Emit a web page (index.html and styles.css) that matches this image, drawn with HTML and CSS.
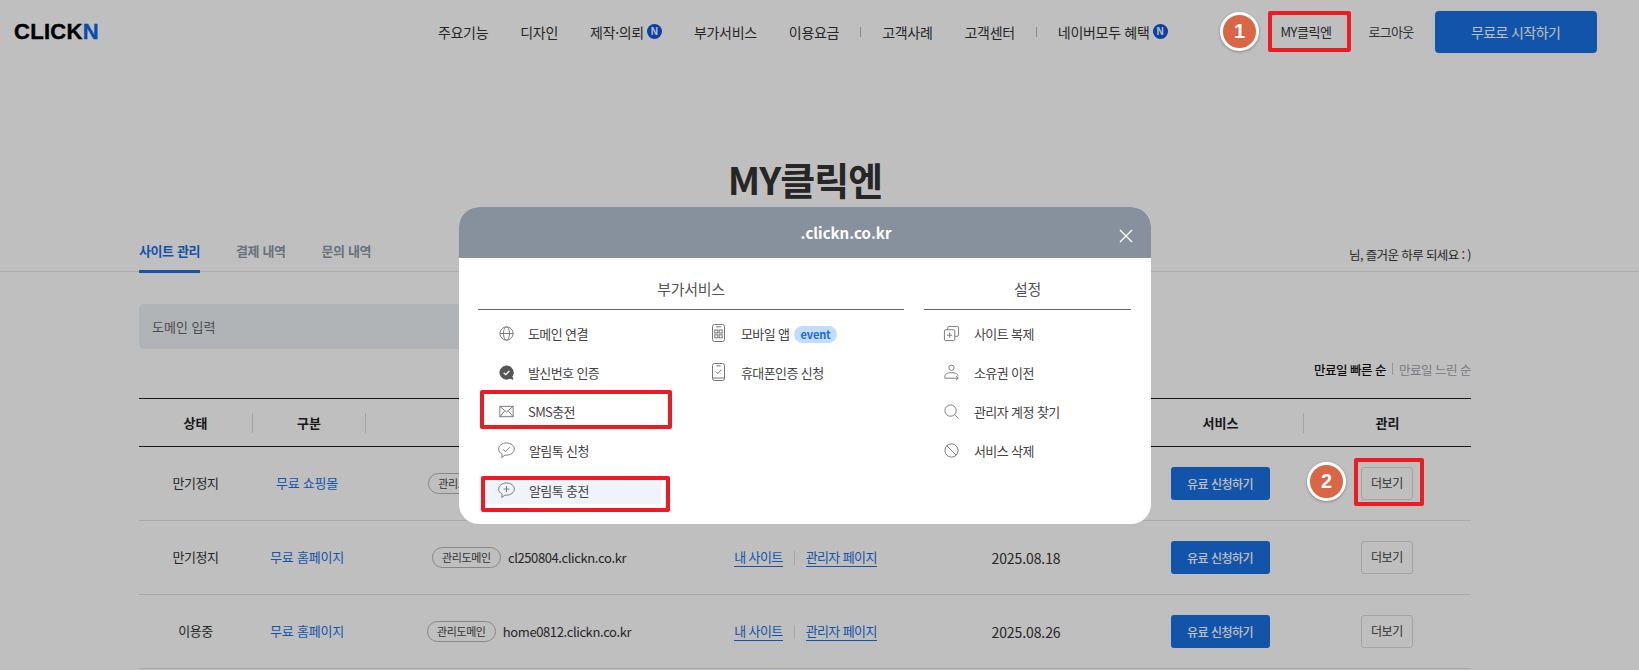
FILE: index.html
```html
<!DOCTYPE html>
<html lang="ko">
<head>
    <meta charset="UTF-8">
    <meta name="viewport" content="width=device-width, initial-scale=1.0">
    <title>MY클릭엔</title>
    <link rel="stylesheet" href="styles.css">
</head>
<body>
    <div class="page">
        <header class="top">
            <a class="logo">CLICK<b>N</b></a>
            <nav class="gnb">
                <a>주요기능</a>
                <a>디자인</a>
                <a>제작·의뢰<i class="new">N</i></a>
                <a>부가서비스</a>
                <a>이용요금</a>
                <span class="gnb-sep"></span>
                <a>고객사례</a>
                <a>고객센터</a>
                <span class="gnb-sep"></span>
                <a>네이버모두 혜택<i class="new">N</i></a>
            </nav>
            <div class="util">
                <a class="util-my">MY클릭엔</a>
                <a class="util-out">로그아웃</a>
                <a class="start-btn">무료로 시작하기</a>
            </div>
        </header>

        <h1 class="page-title">MY클릭엔</h1>

        <div class="tabs-line">
            <div class="wrap tabs-row">
                <div class="tabs">
                    <a class="tab on">사이트 관리</a>
                    <a class="tab">결제 내역</a>
                    <a class="tab">문의 내역</a>
                </div>
                <p class="hello">님, 즐거운 하루 되세요 : )</p>
            </div>
        </div>

        <div class="wrap">
            <div class="search-box">도메인 입력</div>
            <div class="sort">
                <a class="on">만료일 빠른 순</a>
                <span class="sort-sep"></span>
                <a>만료일 느린 순</a>
            </div>

            <div class="tbl">
                <div class="thead">
                    <div>상태</div>
                    <div>구분</div>
                    <div></div>
                    <div></div>
                    <div></div>
                    <div>서비스</div>
                    <div>관리</div>
                </div>
                <div class="trow">
                    <div class="state">만기정지</div>
                    <div class="kind">무료 쇼핑몰</div>
                    <div class="domain domain-first"><span class="badge">관리도메인</span></div>
                    <div></div>
                    <div></div>
                    <div><a class="pay-btn">유료 신청하기</a></div>
                    <div><a class="more-btn">더보기</a></div>
                </div>
                <div class="trow">
                    <div class="state">만기정지</div>
                    <div class="kind">무료 홈페이지</div>
                    <div class="domain"><span class="badge">관리도메인</span>cl250804.clickn.co.kr</div>
                    <div class="links"><a>내 사이트</a><span class="link-sep"></span><a>관리자 페이지</a></div>
                    <div class="date">2025.08.18</div>
                    <div><a class="pay-btn">유료 신청하기</a></div>
                    <div><a class="more-btn">더보기</a></div>
                </div>
                <div class="trow">
                    <div class="state">이용중</div>
                    <div class="kind">무료 홈페이지</div>
                    <div class="domain"><span class="badge">관리도메인</span>home0812.clickn.co.kr</div>
                    <div class="links"><a>내 사이트</a><span class="link-sep"></span><a>관리자 페이지</a></div>
                    <div class="date">2025.08.26</div>
                    <div><a class="pay-btn">유료 신청하기</a></div>
                    <div><a class="more-btn">더보기</a></div>
                </div>
            </div>
        </div>

        <div class="dim">
            <div class="modal">
                <div class="modal-head">
                    <strong>.clickn.co.kr</strong>
                    <svg class="close" viewBox="0 0 14 14"><path d="M1 1l12 12M13 1L1 13"/></svg>
                </div>
                <div class="modal-body">
                    <section class="group group-svc">
                        <h3>부가서비스</h3>
                        <div class="group-cols">
                            <ul class="menu">
                                <li>
                                    <svg class="ico" viewBox="0 0 18 18"><circle cx="9" cy="9" r="7"/><ellipse cx="9" cy="9" rx="3.2" ry="7"/><path d="M2 9h14"/></svg>
                                    <span>도메인 연결</span>
                                </li>
                                <li>
                                    <svg class="ico" viewBox="0 0 18 18"><path class="solid" d="M9 2a7 7 0 1 0 3.6 13l3.2 1.2-1-3A7 7 0 0 0 9 2z"/><path class="tick" d="M6 9.2l2.2 2.1L12 7.4"/></svg>
                                    <span>발신번호 인증</span>
                                </li>
                                <li>
                                    <svg class="ico" viewBox="0 0 18 18"><rect x="2" y="3.5" width="14" height="11"/><path d="M2 3.5l7 6 7-6M2 14.5l5-6M16 14.5l-5-6"/></svg>
                                    <span>SMS충전</span>
                                </li>
                                <li class="talk">
                                    <svg class="ico" viewBox="0 0 18 18"><path d="M9 1C4.400 1 .7 3.900 .7 7.500c0 2.300 1.500 4.300 3.800 5.500l-.6 3.500 3.500-2.700c.5.100 1 .1 1.600.1 4.600 0 8.300-2.900 8.300-6.400S13.600 1 9 1z"/><path d="M5.500 7.800l2.500 2.400 4.500-4.600"/></svg>
                                    <span>알림톡 신청</span>
                                </li>
                                <li class="talk hover">
                                    <svg class="ico" viewBox="0 0 18 18"><path d="M9 1C4.400 1 .7 3.900 .7 7.500c0 2.300 1.500 4.300 3.800 5.500l-.6 3.500 3.500-2.700c.5.100 1 .1 1.600.1 4.600 0 8.300-2.900 8.300-6.400S13.600 1 9 1z"/><path d="M9 4.300v6.400M5.800 7.500h6.400"/></svg>
                                    <span>알림톡 충전</span>
                                </li>
                            </ul>
                            <ul class="menu">
                                <li class="phone">
                                    <svg class="ico-phone" viewBox="0 0 13 18"><rect x="0.500" y="0.500" width="12" height="17" rx="2"/><path d="M4 2.800h5"/><rect x="2.800" y="6" width="3" height="3"/><rect x="7.200" y="6" width="3" height="3"/><rect x="2.800" y="10.800" width="3" height="3"/><rect x="7.200" y="10.800" width="3" height="3"/></svg>
                                    <span>모바일 앱<span class="event">event</span></span>
                                </li>
                                <li class="phone">
                                    <svg class="ico-phone" viewBox="0 0 13 18"><rect x="0.500" y="0.500" width="12" height="17" rx="2"/><path d="M4.500 2.800h4M.5 15h12M3.800 8.500l2 2 3.500-3.800"/></svg>
                                    <span>휴대폰인증 신청</span>
                                </li>
                            </ul>
                        </div>
                    </section>
                    <section class="group group-set">
                        <h3>설정</h3>
                        <ul class="menu">
                            <li>
                                <svg class="ico" viewBox="0 0 18 18"><rect x="1.500" y="5" width="11" height="11.500" rx="1.500"/><path d="M5 5V3a1.500 1.500 0 0 1 1.500-1.500h8.500A1.500 1.500 0 0 1 16.500 3v7.500A1.500 1.500 0 0 1 15 12h-2.500M7 8v5.500M4.300 10.800h5.400"/></svg>
                                <span>사이트 복제</span>
                            </li>
                            <li>
                                <svg class="ico" viewBox="0 0 18 18"><circle cx="9" cy="4" r="2.800"/><path d="M2 15v-1.500C2 10.500 4.500 9.200 9 9.200s7 1.300 7 3.800M2 15h14M13.800 12.800l2.400 2.200-2.400 2.200"/></svg>
                                <span>소유권 이전</span>
                            </li>
                            <li>
                                <svg class="ico" viewBox="0 0 18 18"><circle cx="8" cy="8" r="6"/><path d="M12.500 12.500l4 4"/></svg>
                                <span>관리자 계정 찾기</span>
                            </li>
                            <li>
                                <svg class="ico" viewBox="0 0 18 18"><circle cx="9" cy="9" r="7"/><path d="M4 4l10 10"/></svg>
                                <span>서비스 삭제</span>
                            </li>
                        </ul>
                    </section>
                </div>
            </div>
        </div>

        <!-- guide marks on top of the capture -->
        <span class="mark mark-my"></span>
        <span class="mark mark-sms"></span>
        <span class="mark mark-talk"></span>
        <span class="mark mark-more"></span>
        <span class="step step-1">1</span>
        <span class="step step-2">2</span>
    </div>
</body>
</html>
```

FILE: styles.css
```css
* { box-sizing: border-box; }
html, body { margin: 0; padding: 0; height: 670px; overflow: hidden; background-color: #fff; }
body { font-family: 'Noto Sans CJK KR', 'Noto Sans', sans-serif; color: #333; font-size: 13px; }
a { color: inherit; text-decoration: none; }
ul { list-style: none; margin: 0; padding: 0; }
h1, h3, p { margin: 0; }

.page { position: relative; width: 1639px; height: 670px; overflow: hidden; }
.wrap { width: 1332px; margin-left: 139px; }

/* header */
.top { display: flex; align-items: center; height: 63px; }
.logo { margin-left: 14px; font-family: 'Liberation Sans', sans-serif; font-size: 22px; font-weight: 700; letter-spacing: 0.3px; color: #000; -webkit-text-stroke: 0.4px #000; }
.logo b { color: #0f66ea; -webkit-text-stroke: 0.4px #0f66ea; }
.gnb { display: flex; align-items: center; gap: 32px; margin-left: 339px; font-size: 14px; letter-spacing: -0.3px; color: #333; }
.gnb a { display: flex; align-items: center; }
.gnb-sep { width: 1px; height: 10px; margin: 0 -11px 0 -11px; background-color: #bbb; }
.new { display: inline-block; width: 15px; height: 15px; margin-left: 3px; border-radius: 50%; background-color: #0f54e0; color: #fff; font-family: 'Liberation Sans', sans-serif; font-size: 10px; font-weight: 700; font-style: normal; line-height: 15px; text-align: center; letter-spacing: 0; }
.util { display: flex; align-items: center; margin-left: 113px; font-size: 13px; letter-spacing: -0.5px; }
.util-my { width: 52px; white-space: nowrap; }
.util-out { margin-left: 36px; white-space: nowrap; color: #444; letter-spacing: -0.7px; }
.start-btn { display: flex; align-items: center; justify-content: center; width: 162px; height: 42px; margin-left: 21px; border-radius: 4px; background-color: #1971e3; color: #fff; font-size: 14px; letter-spacing: -0.6px; }

.page-title { margin-top: 93px; height: 46px; width: 1610px; font-size: 38px; font-weight: 700; line-height: 46px; letter-spacing: -1px; text-align: center; color: #333; }

/* tabs */
.tabs-line { margin-top: 30px; height: 40px; border-bottom: 1px solid #e4e4e4; }
.tabs-row { display: flex; justify-content: space-between; }
.tabs { display: flex; gap: 36px; }
.tab { height: 41px; padding-top: 9px; font-size: 13px; font-weight: 700; line-height: 20px; letter-spacing: -0.4px; color: #8a98a8; }
.tab.on { color: #1971e3; border-bottom: 3px solid #1971e3; }
.hello { padding-top: 13px; font-size: 12.5px; line-height: 20px; letter-spacing: -0.6px; color: #333; }

.search-box { width: 500px; height: 45px; margin-top: 32px; padding-left: 13px; border-radius: 5px; background-color: #ebf0f5; font-size: 13px; line-height: 45px; color: #666; }

.sort { display: flex; align-items: center; justify-content: flex-end; gap: 6px; height: 20px; margin-top: 10px; margin-bottom: 19px; font-size: 12.500px; letter-spacing: -0.5px; color: #a0a4aa; }
.sort .on { color: #111; font-weight: 500; }
.sort-sep { width: 1px; height: 12px; background-color: #ccc; }

/* table */
.thead, .trow { display: grid; grid-template-columns: 113px 113px 328px 222px 222px 166px 168px; align-items: center; text-align: center; }
.thead { height: 49px; border-top: 1px solid #222; border-bottom: 1px solid #222; font-weight: 700; font-size: 13px; color: #222; }
.thead > div { height: 20px; line-height: 20px; }
.thead > div + div { border-left: 1px solid #ddd; }
.trow { height: 74px; border-bottom: 1px solid #e2e2e2; font-size: 13px; letter-spacing: -0.4px; }
.state { padding-bottom: 2px; }
.kind { padding-right: 3px; padding-bottom: 2px; color: #1971e3; letter-spacing: -0.2px; }
.domain { display: flex; align-items: center; justify-content: center; font-size: 13px; letter-spacing: -0.4px; }
.domain-first { justify-content: flex-start; padding-left: 63px; }
.badge { display: inline-block; flex: none; width: 69px; height: 21px; margin-right: 7px; border: 1px solid #b5b5b5; border-radius: 11px; font-size: 11px; line-height: 19px; letter-spacing: -0.4px; text-align: center; color: #444; }
.links { display: flex; align-items: center; justify-content: center; padding-left: 3px; }
.links a { padding-bottom: 1px; border-bottom: 1px solid #1971e3; line-height: 16px; color: #1971e3; font-size: 13px; letter-spacing: -0.6px; }
.link-sep { width: 1px; height: 14px; margin: 0 11px; background-color: #ddd; }
.date { font-size: 14px; letter-spacing: -0.1px; }
.pay-btn { display: inline-block; width: 99px; height: 33px; border-radius: 3px; background-color: #1971e3; color: #fff; font-size: 12px; font-weight: 500; line-height: 33px; letter-spacing: -0.5px; vertical-align: middle; }
.more-btn { display: inline-block; width: 52px; height: 33px; border: 1px solid #dcdcdc; border-radius: 3px; font-size: 12px; line-height: 30px; letter-spacing: -0.3px; color: #444; vertical-align: middle; }

/* dim + modal */
.dim { position: absolute; left: 0; top: 0; width: 100%; height: 100%; padding-top: 207px; background-color: rgba(0, 0, 0, 0.25); }
.modal { width: 692px; margin-left: 459px; border-radius: 20px; overflow: hidden; background-color: #fff; }
.modal-head { position: relative; display: flex; align-items: center; justify-content: center; height: 51px; padding-left: 82px; background-color: #87919d; color: #fff; font-size: 15px; }
.modal-head strong { font-weight: 700; }
.close { position: absolute; right: 18px; top: 22px; width: 14px; height: 14px; }
.close path { fill: none; stroke: #fff; stroke-width: 1.4; }
.modal-body { display: flex; gap: 20px; padding: 20px 20px 20px 19px; }
.group h3 { height: 32px; border-bottom: 1px solid #666; font-size: 15px; font-weight: 400; line-height: 22px; letter-spacing: -0.3px; text-align: center; color: #555; }
.group-svc { width: 426px; }
.group-set { width: 207px; }
.group-cols { display: flex; gap: 38px; padding-left: 7px; }
.group-cols > .menu:first-child { width: 176px; }
.menu { display: flex; flex-direction: column; gap: 11.3px; margin-top: 9px; }
.group-set .menu { padding-left: 6px; }
.menu li { display: flex; align-items: center; gap: 13px; height: 28px; padding-left: 13px; font-size: 13px; letter-spacing: -0.6px; color: #444; white-space: nowrap; }
.group-set .menu li { gap: 14px; }
.menu li.talk { gap: 14px; }
.menu li.phone { gap: 16px; }
.menu li.hover { background-color: #f0f3f9; }
.ico { flex: none; width: 17px; height: 17px; }
.ico-phone { flex: none; width: 13px; height: 18px; }
.ico *, .ico-phone * { fill: none; stroke: #777; stroke-width: 1; }
.ico .solid { fill: #555; stroke: #555; }
.ico .tick { stroke: #fff; stroke-width: 1.4; }
.event { display: inline-block; height: 17px; margin-left: 5px; padding: 0 6px; border-radius: 9px; background-color: #c4dcff; color: #1a6ee0; font-size: 11px; font-weight: 700; line-height: 16px; letter-spacing: -0.1px; }

/* guide marks */
.mark { position: absolute; border: 4px solid #ed1c24; border-radius: 2px; }
.mark-my { left: 1268px; top: 11px; width: 83px; height: 41px; }
.mark-sms { left: 480px; top: 390px; width: 192px; height: 39px; }
.mark-talk { left: 481px; top: 476px; width: 189px; height: 36px; }
.mark-more { left: 1354px; top: 458px; width: 70px; height: 48px; }
.step { position: absolute; width: 39px; height: 39px; border: 3px solid #fff; border-radius: 50%; background-color: #d96645; color: #fff; font-family: 'Liberation Sans', sans-serif; font-size: 20px; font-weight: 700; line-height: 33px; text-align: center; box-shadow: 0 1px 3px rgba(0, 0, 0, 0.3); }
.step-1 { left: 1220px; top: 12px; }
.step-2 { left: 1307px; top: 462px; }
```
